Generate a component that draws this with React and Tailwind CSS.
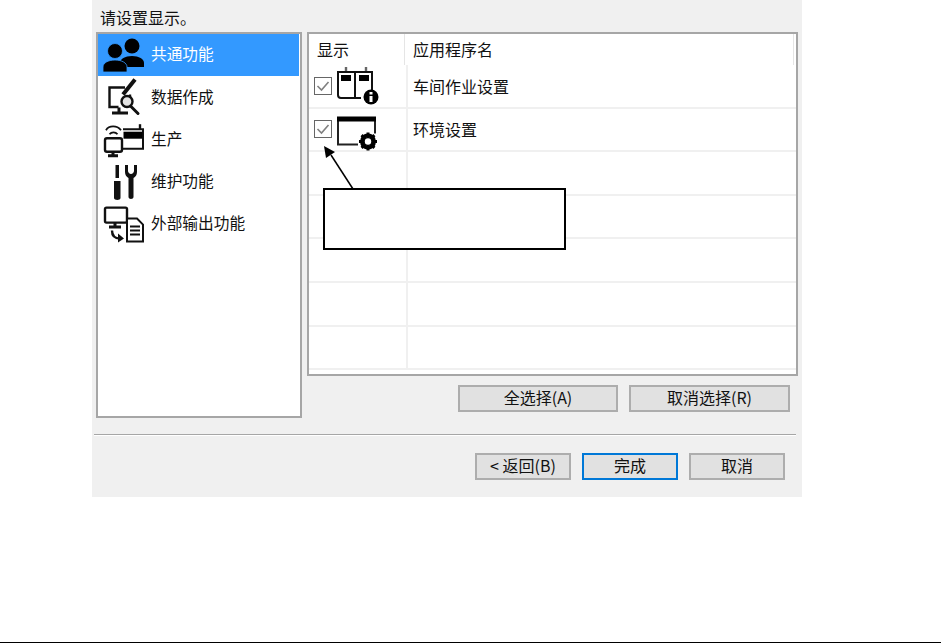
import React from "react";

const font = { fontFamily: '"Noto Sans CJK SC", "Noto Sans", sans-serif' };

// icons keep the screenshot's own coordinates in their viewBox, easier to check against it
function PeopleIcon() {
  return (
    <svg className="overflow-visible" width="48" height="42" viewBox="100 34 48 42" fill="#000">
      <circle cx="132" cy="46" r="7.500" />
      <path d="M120 67v-4c0-4 5-7 12-7s12 3 12 7v4z" />
      <circle cx="115" cy="51" r="7.500" stroke="#3399ff" strokeWidth="0.800" />
      <path d="M103 72v-5c0-4 5-7 12-7s12 3 12 7v5z" stroke="#3399ff" strokeWidth="0.800" />
    </svg>
  );
}

function DataIcon() {
  return (
    <svg className="overflow-visible" width="48" height="42" viewBox="100 76.500 48 42" fill="none" stroke="#111">
      <path d="M125 88h-15.500v19.500h9M130 95v4" strokeWidth="2.400" />
      <path d="M112 113.500h16M119 108v5" strokeWidth="3" />
      <path d="M135 80 123 95" strokeWidth="4" />
      <circle cx="127" cy="102" r="5.500" strokeWidth="2.400" fill="#e4e4e4" />
      <path d="m131 107 7 7" strokeWidth="3" strokeLinecap="round" />
    </svg>
  );
}

function ProductionIcon() {
  return (
    <svg className="overflow-visible" width="48" height="42" viewBox="100 118.800 48 42" fill="none" stroke="#111">
      <path d="M106 130c3-5 11-5 15 0M109.500 134c2-2.500 6-2.500 8 0" strokeWidth="1.800" />
      <path d="M123 129h20v19.500h-21" strokeWidth="2" />
      <rect x="123.500" y="131.500" width="19" height="7" fill="#000" stroke="none" />
      <path d="M140 124v5" strokeWidth="2.400" />
      <rect x="105" y="138" width="17" height="13.500" rx="2" strokeWidth="2.400" fill="#fff" />
      <path d="M113 151v4M108 155.500h10" strokeWidth="3" />
    </svg>
  );
}

function ToolsIcon() {
  return (
    <svg className="overflow-visible" width="48" height="42" viewBox="100 161 48 42" fill="#111">
      <rect x="115.500" y="165" width="3.500" height="13" />
      <path d="M114 181h6.500v17c0 2.500-6.500 2.500-6.500 0z" />
      <path d="M125 165h3v6c0 1.500 1.500 3 3 3s3-1.500 3-3v-6h3v7c0 3-1.500 5-3.500 6v19c0 2.500-5 2.500-5 0v-19c-2-1-3.500-3-3.500-6z" />
    </svg>
  );
}

function OutputIcon() {
  return (
    <svg className="overflow-visible" width="48" height="42" viewBox="100 203.400 48 42" fill="none" stroke="#111">
      <rect x="105" y="208" width="22" height="15" rx="1.500" strokeWidth="2.400" />
      <path d="M115 223v4M109 227.500h12" strokeWidth="3" />
      <path d="M112 231c0 6 3 8 8 8" strokeWidth="2.400" />
      <path d="m118 234 6 5-6 4z" fill="#111" stroke="none" />
      <path d="M127 219h10l6 6v17h-16z" strokeWidth="2" fill="#fff" />
      <path d="M130 227h10M130 231h10M130 235h10" strokeWidth="2" />
    </svg>
  );
}

function InfoAppIcon() {
  return (
    <svg className="overflow-visible" width="44" height="43" viewBox="335 65 44 43" fill="none">
      <path d="M346 68v4M366 68v4" stroke="#666" strokeWidth="2.400" />
      <path d="M338 73h17v26h-14q-3 0-3-3z" stroke="#111" strokeWidth="2" />
      <path d="M355 73h17v18M355 99h6" stroke="#111" strokeWidth="2" />
      <rect x="341" y="76" width="10" height="6" fill="#000" />
      <rect x="359" y="76" width="10" height="6" fill="#000" />
      <circle cx="371" cy="98" r="7.500" fill="#000" />
      <rect x="369.500" y="97" width="3" height="6" fill="#fff" />
      <rect x="369.500" y="93" width="3" height="2.500" fill="#fff" />
    </svg>
  );
}

function GearAppIcon() {
  return (
    <svg className="overflow-visible" width="44" height="43" viewBox="335 108.500 44 43" fill="none">
      <path d="M338 120v25h20M375 120v14" stroke="#222" strokeWidth="2" />
      <rect x="337" y="117" width="39" height="5" fill="#000" />
      <circle cx="368" cy="142" r="6" stroke="#000" strokeWidth="4" />
      <path d="M368 133v18M359 142h18M361.600 135.600l12.800 12.800M374.400 135.600l-12.800 12.800" stroke="#000" strokeWidth="3" />
      <circle cx="368" cy="142" r="3.200" fill="#fff" />
    </svg>
  );
}

function Checkbox() {
  return (
    <div className="w-[18px] h-[18px] shrink-0 border-[1.500px] border-[#666] bg-white flex items-center justify-center">
      <svg width="14" height="14" viewBox="0 0 14 14" fill="none" stroke="#808080" strokeWidth="1.600">
        <path d="m1.500 7 4 4 7-8" />
      </svg>
    </div>
  );
}

const categories = [
  { label: "共通功能", icon: <PeopleIcon />, selected: true },
  { label: "数据作成", icon: <DataIcon /> },
  { label: "生产", icon: <ProductionIcon /> },
  { label: "维护功能", icon: <ToolsIcon /> },
  { label: "外部输出功能", icon: <OutputIcon /> },
];

function Button({ children, className = "" }) {
  return (
    <button className={"h-[27px] pb-[3px] bg-[#e1e1e1] border-2 text-[16px] leading-none text-[#111] flex items-center justify-center " + className}>
      {children}
    </button>
  );
}

export default function App() {
  return (
    <div className="relative w-[941px] h-[643px] bg-white overflow-hidden" style={font}>
      <div className="ml-[92px] w-[710px] h-[497px] bg-[#f0f0f0] flex flex-col text-[16px] text-[#111]">
        <div className="h-[32px] pl-[8px] pt-[4px] leading-[26px]">请设置显示。</div>

        <div className="flex items-start pl-[4px] gap-[5px]">
          {/* left category list */}
          <div className="w-[206px] h-[386px] shrink-0 bg-white border-2 border-[#a6a6a6] pr-px flex flex-col">
            {categories.map((c) => (
              <div
                key={c.label}
                className={"h-[42.300px] shrink-0 flex items-center " + (c.selected ? "bg-[#3399ff] text-white" : "")}
              >
                <div className="shrink-0 w-[53px] pl-[2px] flex">{c.icon}</div>
                <span className="leading-none text-[15.700px] pb-[2px]">{c.label}</span>
              </div>
            ))}
          </div>

          {/* right app table */}
          <div className="flex flex-col w-[491px]">
            <div className="h-[344px] bg-white border-2 border-[#a6a6a6] overflow-hidden">
              <div className="h-[31px] flex items-center">
                <div className="w-[96px] h-full pl-[8px] pb-[2px] flex items-center border-r border-[#e5e5e5]">显示</div>
                <div className="pl-[8px] pb-[2px] flex-1">应用程序名</div>
                <div className="w-px h-full bg-[#e5e5e5] mr-[2px]"></div>
              </div>
              {[0, 1, 2, 3, 4, 5, 6].map((i) => (
                <div key={i} className="h-[43.600px] flex border-b-2 border-[#f0f0f0]">
                  <div className="w-[99px] shrink-0 pl-[5px] flex items-center gap-[3px] border-r-2 border-[#f0f0f0]">
                    {i === 0 && (<><Checkbox /><InfoAppIcon /></>)}
                    {i === 1 && (<><Checkbox /><GearAppIcon /></>)}
                  </div>
                  <div className="pl-[5px] flex items-center">
                    {i === 0 && "车间作业设置"}
                    {i === 1 && "环境设置"}
                  </div>
                </div>
              ))}
            </div>
            <div className="flex justify-end gap-[11px] mt-[9px] pr-[8px]">
              <Button className="w-[160px] border-[#adadad]">全选择(A)</Button>
              <Button className="w-[161px] border-[#adadad]">取消选择(R)</Button>
            </div>
          </div>
        </div>

        <div className="mt-[16px] mx-[2px] w-[702px] h-[2px] bg-[#a6a6a6] border-b border-white"></div>

        <div className="flex justify-end gap-[11px] mt-[17px] pr-[17px]">
          <Button className="w-[96px] border-[#adadad]">&lt; 返回(B)</Button>
          <Button className="w-[96px] border-[#0078d7]">完成</Button>
          <Button className="w-[96px] border-[#adadad]">取消</Button>
        </div>
      </div>

      {/* callout over the table */}
      <div className="absolute left-[323px] top-[188px] w-[243px] h-[62px] bg-white border-2 border-black"></div>
      <svg className="absolute left-[320px] top-[140px]" width="40" height="50" viewBox="320 140 40 50">
        <path d="M353 189 331 155" stroke="#000" strokeWidth="1.500" />
        <path d="M324 146 335 152 326 158z" fill="#000" />
      </svg>

      <div className="absolute left-0 right-0 bottom-0 h-px bg-black"></div>
    </div>
  );
}
